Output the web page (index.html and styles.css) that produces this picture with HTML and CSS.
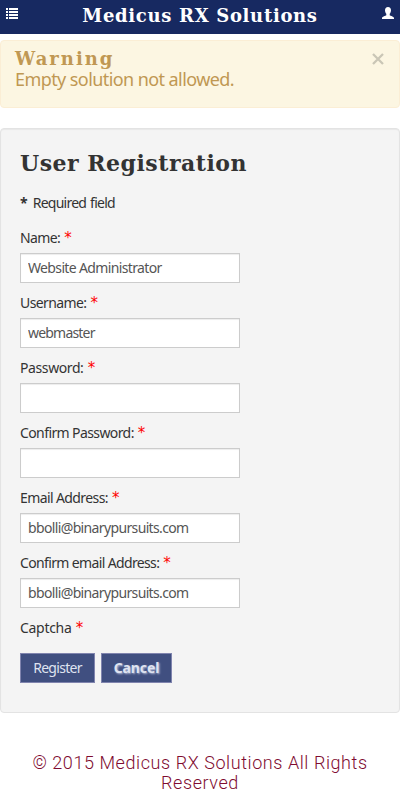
FILE: index.html
```html
<!DOCTYPE html>
<html lang="en">
<head>
<meta charset="utf-8">
<title>Medicus RX Solutions</title>
<link rel="stylesheet" href="styles.css">
</head>
<body>
<header class="topbar">
  <svg class="icon" width="14" height="14" viewBox="0 0 14 14" fill="#fff"><path d="M1 1h2v2H1zM4 1h9v2H4zM1 4h2v2H1zM4 4h9v2H4zM1 7h2v2H1zM4 7h9v2H4zM1 10h2v2H1zM4 10h9v2H4z"/></svg>
  <h1 class="brand">Medicus RX Solutions</h1>
  <svg class="icon" width="14" height="14" viewBox="0 0 14 14" fill="#fff"><path d="M7 0C5 0 4 1.400 4 3.200C4 4.800 4.600 6 5.300 6.800V8.300C4.600 9 1.200 9.600 1 11V12H13V11C12.800 9.600 9.400 9 8.700 8.300V6.800C9.400 6 10 4.800 10 3.200C10 1.400 9 0 7 0Z"/></svg>
</header>
<section class="alert">
  <div>
    <h4 class="alert-title">Warning</h4>
    <p class="alert-text">Empty solution not allowed.</p>
  </div>
  <svg class="close" width="12" height="12" viewBox="0 0 12 12" fill="none" stroke="#cac6b6" stroke-width="2.300"><path d="M1 1l10 10M11 1L1 11"/></svg>
</section>
<form class="well">
  <h2 class="heading">User Registration</h2>
  <p class="label required"><b>*</b> Required field</p>
  <label class="label l-name" for="name">Name: <i>*</i></label>
  <input class="field f-name" id="name" type="text" value="Website Administrator">
  <label class="label l-user" for="user">Username: <i>*</i></label>
  <input class="field f-user" id="user" type="text" value="webmaster">
  <label class="label l-pass" for="pass">Password: <i>*</i></label>
  <input class="field" id="pass" type="password">
  <label class="label l-pass2" for="pass2">Confirm Password: <i>*</i></label>
  <input class="field" id="pass2" type="password">
  <label class="label l-mail" for="mail">Email Address: <i>*</i></label>
  <input class="field f-mail" id="mail" type="text" value="bbolli@binarypursuits.com">
  <label class="label l-mail2" for="mail2">Confirm email Address: <i>*</i></label>
  <input class="field f-mail" id="mail2" type="text" value="bbolli@binarypursuits.com">
  <p class="label captcha">Captcha <i>*</i></p>
  <div class="actions">
    <button class="btn register" type="button">Register</button>
    <button class="btn cancel" type="button">Cancel</button>
  </div>
</form>
<footer class="footer">© 2015 Medicus RX Solutions All Rights<br>Reserved</footer>
</body>
</html>
```
FILE: styles.css
```css
* { box-sizing: border-box; }
body, h1, h2, h4, p { margin: 0; }
body {
  height: 795px;
  overflow: hidden;
  background: #fff;
  color: #333;
  font: 14px/20px "Noto Sans", sans-serif;
}
.topbar {
  display: flex;
  justify-content: space-between;
  height: 34px;
  padding: 7px 5px;
  background: #172961;
}
.brand, .alert-title, .heading {
  font-family: "DejaVu Serif", serif;
  font-weight: bold;
  white-space: nowrap;
}
.brand { color: #fff; font-size: 18px; line-height: 17px; letter-spacing: .68px; }
.alert {
  display: flex;
  justify-content: space-between;
  height: 68px;
  margin-top: 6px;
  padding: 8px 15px 0 14px;
  border: 1px solid #fbeed5;
  border-radius: 4px;
  background: #fcf6e2;
  color: #c09853;
}
.alert-title { font-size: 18px; line-height: 20px; letter-spacing: 2px; }
.alert-text { font-size: 18px; line-height: 20px; letter-spacing: -.58px; white-space: nowrap; }
.close { margin-top: 4px; }
.well {
  height: 585px;
  margin-top: 20px;
  padding: 19px;
  border: 1px solid #e3e3e3;
  border-radius: 4px;
  background: #f4f4f4;
  box-shadow: inset 0 1px 1px rgba(0, 0, 0, .05);
}
.heading { height: 45px; font-size: 22px; line-height: 30px; letter-spacing: .5px; }
.label { display: block; height: 20px; margin-bottom: 5px; white-space: nowrap; letter-spacing: -.6px; }
.label i { margin-left: 1px; font-family: "DejaVu Sans", sans-serif; font-size: 15px; line-height: 1; color: #f00; font-style: normal; }
.required { height: 20px; margin-bottom: 15px; letter-spacing: -.75px; word-spacing: 1px; }
.required b { margin-right: 2px; }
.l-pass { letter-spacing: -.4px; }
.l-mail2 { letter-spacing: -.64px; }
.field {
  display: block;
  width: 220px;
  height: 30px;
  margin-bottom: 10px;
  padding: 3px 7px 5px;
  border: 1px solid #ccc;
  background: #fff;
  box-shadow: inset 0 1px 1px rgba(0, 0, 0, .075);
  color: #555;
  font: inherit;
  letter-spacing: -.64px;
}
.f-user { letter-spacing: -.8px; }
.captcha { margin-bottom: 15px; letter-spacing: -.3px; }
.actions { display: flex; gap: 6px; }
.btn {
  height: 30px;
  padding: 0;
  border: 1px solid #8084ae;
  background: #404f80;
  color: #dfe3f0;
  font: inherit;
  text-align: center;
}
.register { width: 75px; letter-spacing: -.7px; }
.cancel { width: 71px; font-weight: bold; letter-spacing: -.1px; text-shadow: 1px 1px 2px #b4bbd6; }
.footer {
  margin-top: 40px;
  color: #800b30;
  font: 18px/20px Roboto, sans-serif;
  font-weight: 300;
  letter-spacing: .57px;
  text-align: center;
  white-space: nowrap;
}
```
